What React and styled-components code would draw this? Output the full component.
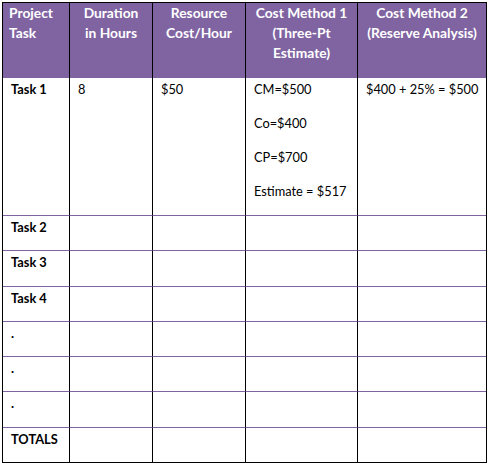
import styled, { createGlobalStyle } from 'styled-components'

const purple = '#8064a2'

const GlobalStyle = createGlobalStyle`
  body {
    margin: 0;
    background: #ffffff;
    font-family: 'Lato', 'Liberation Sans', sans-serif;
  }
`

const Page = styled.div`
  padding: 2px;
`

const Grid = styled.div`
  display: grid;
  grid-template-columns: 67px 83px 93px 112px 128px;
  width: 485px;
  box-sizing: border-box;
  border: 1px solid #000;
`

const HeadCell = styled.div`
  box-sizing: border-box;
  height: 75px;
  background: ${purple};
  color: #fff;
  font-weight: bold;
  font-size: 13.8px;
  line-height: 20px;
  padding: 0 6px;
  text-align: ${(p) => (p.$left ? 'left' : 'center')};
  border-right: ${(p) => (p.$last ? 'none' : '1px solid #000')};
`

const Cell = styled.div`
  box-sizing: border-box;
  height: ${(p) => p.$h}px;
  font-size: 12.8px;
  line-height: 20px;
  color: #000;
  padding: 1px 8px 0;
  white-space: nowrap;
  font-weight: ${(p) => (p.$bold ? 'bold' : 'normal')};
  border-right: ${(p) => (p.$last ? 'none' : '1px solid #000')};
  border-bottom: ${(p) => (p.$end ? 'none' : `1px solid ${purple}`)};
`

const Line = styled.p`
  margin: 0 0 14px;
`

const headers = [
  { text: ['Project', 'Task'], left: true },
  { text: ['Duration', 'in Hours'] },
  { text: ['Resource', 'Cost/Hour'] },
  { text: ['Cost Method 1', '(Three-Pt', 'Estimate)'] },
  { text: ['Cost Method 2', '(Reserve Analysis)'] }
]

const rows = [
  { label: 'Task 2', h: 35 },
  { label: 'Task 3', h: 36 },
  { label: 'Task 4', h: 35 },
  { label: '.', h: 35 },
  { label: '.', h: 35 },
  { label: '.', h: 36 },
  { label: 'TOTALS', h: 34, end: true }
]

const App = () => {
  return (
    <Page>
      <GlobalStyle />
      <Grid>
        {headers.map((h, i) => (
          <HeadCell key={i} $left={h.left} $last={i === 4}>
            {h.text.map((t) => (
              <div key={t}>{t}</div>
            ))}
          </HeadCell>
        ))}

        <Cell $h={138} $bold>Task 1</Cell>
        <Cell $h={138}>8</Cell>
        <Cell $h={138}>$50</Cell>
        <Cell $h={138}>
          <Line>CM=$500</Line>
          <Line>Co=$400</Line>
          <Line>CP=$700</Line>
          <Line>Estimate = $517</Line>
        </Cell>
        <Cell $h={138} $last>$400 + 25% = $500</Cell>

        {rows.map((r, i) =>
          [0, 1, 2, 3, 4].map((c) => (
            <Cell key={`${i}-${c}`} $h={r.h} $bold={c === 0} $last={c === 4} $end={r.end}>
              {c === 0 ? r.label : ''}
            </Cell>
          ))
        )}
      </Grid>
    </Page>
  )
}

export default App
